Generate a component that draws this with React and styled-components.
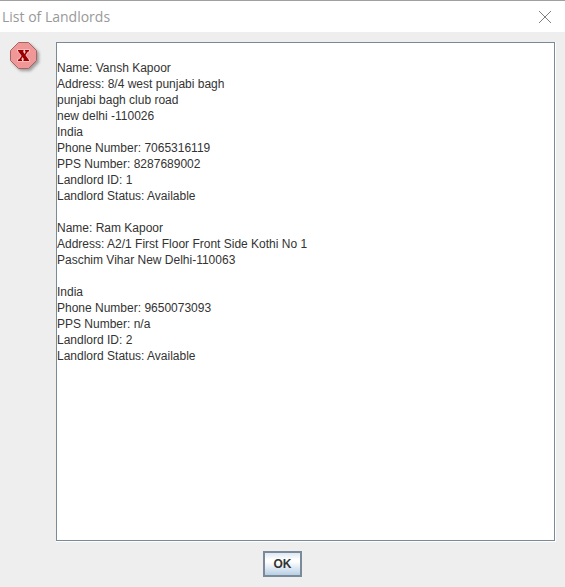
import React from "react";
import styled, { createGlobalStyle } from "styled-components";

const GlobalStyle = createGlobalStyle`
  *, *::before, *::after {
    box-sizing: border-box;
  }
  body {
    margin: 0;
    background: #eeeeee;
    color: #333333;
    font: 12px/16px "Liberation Sans", Arial, sans-serif;
  }
`;

const Dialog = styled.main`
  display: flex;
  flex-direction: column;
  min-height: 100vh;
  border-top: 1px solid #a0a0a0;
`;

const TitleBar = styled.header`
  display: flex;
  align-items: center;
  justify-content: space-between;
  height: 31px;
  padding: 0 12px 0 2px;
  background: #ffffff;
`;

const Title = styled.h1`
  margin: 0;
  color: #999999;
  font: 400 14px/20px "Open Sans", "Segoe UI", sans-serif;
`;

const CloseButton = styled.button`
  display: grid;
  place-items: center;
  width: 16px;
  height: 16px;
  padding: 0;
  border: 0;
  background: transparent;
  color: #808080;
`;

const Content = styled.section`
  display: flex;
  flex: 1;
  gap: 12px;
  padding: 10px 9px 9px 8px;
`;

const IconSlot = styled.div`
  flex: none;
  width: 36px;
  height: 36px;

  svg {
    display: block;
  }
`;

const ScrollFrame = styled.div`
  display: flex;
  flex: 1;
  border: solid #ffffff;
  border-width: 0 1px 1px 0;
`;

const Listing = styled.textarea`
  flex: 1;
  min-width: 0;
  min-height: 360px;
  padding: 1px 0 0;
  border: 1px solid #7a8a99;
  border-radius: 0;
  outline: none;
  resize: none;
  background: #ffffff;
  color: #333333;
  font: inherit;
`;

const Actions = styled.footer`
  display: flex;
  justify-content: center;
  padding-bottom: 10px;
`;

const OkButton = styled.button`
  min-width: 39px;
  height: 26px;
  padding: 0 8px;
  border: 2px solid #7a8a99;
  border-radius: 0;
  background: linear-gradient(#dde8f3 0%, #ffffff 30%, #ffffff 40%, #b8cfe5 100%);
  color: #333333;
  font: 700 12px/16px "Liberation Sans", Arial, sans-serif;
`;

const landlordText = `
Name: Vansh Kapoor
Address: 8/4 west punjabi bagh
punjabi bagh club road
new delhi -110026
India
Phone Number: 7065316119
PPS Number: 8287689002
Landlord ID: 1
Landlord Status: Available

Name: Ram Kapoor
Address: A2/1 First Floor Front Side Kothi No 1
Paschim Vihar New Delhi-110063

India
Phone Number: 9650073093
PPS Number: n/a
Landlord ID: 2
Landlord Status: Available`;

function CloseIcon() {
  return (
    <svg width="14" height="14" viewBox="0 0 14 14" aria-hidden="true">
      <path d="M1 1L13 13M13 1L1 13" stroke="currentColor" strokeWidth="1" />
    </svg>
  );
}

function ErrorIcon() {
  return (
    <svg width="36" height="36" viewBox="0 0 36 36" role="img" aria-label="Error">
      <defs>
        <filter id="soft-shadow" x="-20%" y="-20%" width="150%" height="150%">
          <feDropShadow dx="2" dy="2" stdDeviation="1.5" floodColor="#000000" floodOpacity="0.35" />
        </filter>
      </defs>
      <path
        d="M10.5 .5H20.5L28.5 8.5V18.5L20.5 26.5H10.5L2.5 18.5V8.5Z"
        fill="#f09898"
        stroke="#a86464"
        filter="url(#soft-shadow)"
      />
      <path
        d="M10 8H15.5V9.5H14.8L16.5 12L18 9.5H17V8H21V9.5H20L17.3 13.2L20 17.5H21V19H15.5V17.5H16.2L14.7 15L13 17.5H14V19H10V17.5H11L13.8 13.7L11 9.5H10Z"
        fill="#990000"
        stroke="#ffc4c4"
        strokeWidth="1.5"
        paintOrder="stroke"
      />
      <path d="M12 9L19 18" stroke="#990000" strokeWidth="3" />
    </svg>
  );
}

export default function App() {
  return (
    <>
      <GlobalStyle />
      <Dialog role="dialog" aria-labelledby="dialog-title">
        <TitleBar>
          <Title id="dialog-title">List of Landlords</Title>
          <CloseButton type="button" aria-label="Close">
            <CloseIcon />
          </CloseButton>
        </TitleBar>
        <Content>
          <IconSlot>
            <ErrorIcon />
          </IconSlot>
          <ScrollFrame>
            <Listing
              aria-label="Landlords"
              readOnly
              spellCheck={false}
              defaultValue={landlordText}
            />
          </ScrollFrame>
        </Content>
        <Actions>
          <OkButton type="button">OK</OkButton>
        </Actions>
      </Dialog>
    </>
  );
}
